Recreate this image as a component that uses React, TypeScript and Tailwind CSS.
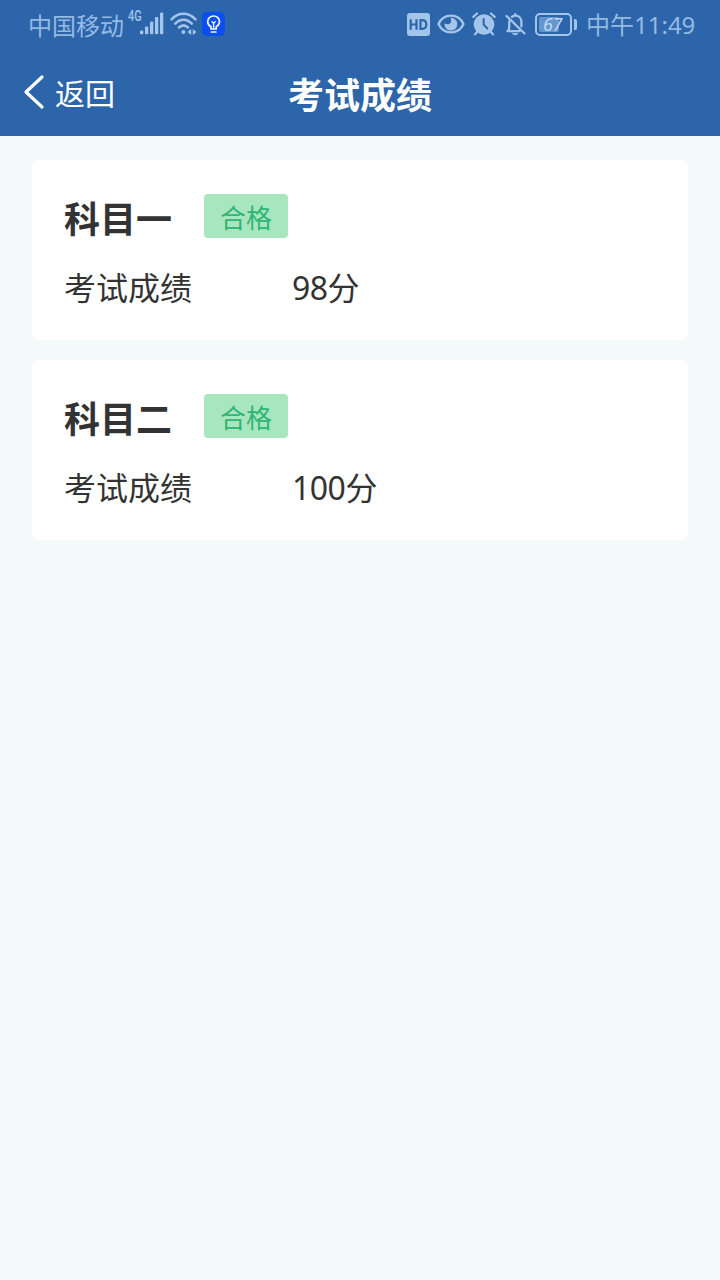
const TINT = '#a3c5ea';

function SignalIcon() {
  return (
    <svg width="24" height="24" viewBox="0 0 24 24" fill={TINT} className="block shrink-0">
      <rect x="0" y="18.5" width="3.300" height="3.8" rx="1" />
      <rect x="5" y="14.5" width="3.300" height="7.8" rx="1" />
      <rect x="10" y="9.5" width="3.300" height="12.8" rx="1" />
      <rect x="15" y="5" width="3.300" height="17.3" rx="1" />
      <rect x="20" y="0.6" width="3.300" height="21.7" rx="1" />
    </svg>
  );
}

function WifiIcon() {
  return (
    <svg width="28" height="24" viewBox="0 0 28 24" fill="none" stroke={TINT} strokeWidth="2.5" strokeLinecap="round" className="block shrink-0">
      <path d="M1.5 7.4C8.5 0 18.500 0 25.500 7.400" />
      <path d="M5.200 11.600C10.200 6.300 16.800 6.300 21.800 11.600" />
      <path d="M9 15.500C12 12.600 15 12.600 18 15.500" />
      <circle cx="13.400" cy="20" r="2" fill={TINT} stroke="none" />
      <path d="M21.200 17V23L17.500 20ZM22.800 17V23L26.500 20Z" fill={TINT} stroke="none" />
    </svg>
  );
}

function BulbIcon() {
  return (
    <svg width="23" height="24" viewBox="0 0 23 24" fill="none" className="block shrink-0">
      <rect width="23" height="24" rx="5" fill="#0b50ee" />
      <g stroke="#f2f6ff" strokeWidth="1.700" strokeLinecap="round" strokeLinejoin="round">
        <path d="M9 17V14.800C7 13.700 5.700 11.900 5.700 9.700A5.900 5.700 0 0 1 17.500 9.700C17.500 11.900 16.200 13.700 14.200 14.800V17ZM9.300 20H13.900" />
        <path d="M11.600 15.500V11.500M10 9.700L11.600 11.300L13.200 9.700" strokeWidth="1.400" />
      </g>
    </svg>
  );
}

function HdIcon() {
  return (
    <svg width="23" height="23" viewBox="0 0 23 23" fill="none" className="block shrink-0">
      <rect width="23" height="23" rx="3" fill={TINT} />
      <path d="M3.700 6.200V16.800M9.500 6.200V16.800M3.700 11.500H9.500M13.500 7.200V15.800H15Q19.300 15.800 19.300 11.500T15 7.200Z" stroke="#2c65a9" strokeWidth="2.200" />
    </svg>
  );
}

function EyeIcon() {
  return (
    <svg width="28" height="20" viewBox="0 0 28 20" fill="none" className="block shrink-0">
      <path d="M1.500 10C4 4.500 8.500 1.600 14 1.600S24 4.500 26.500 10C24 15.500 19.500 18.400 14 18.400S4 15.500 1.500 10Z" stroke={TINT} strokeWidth="2.400" strokeLinejoin="round" />
      <path d="M13.500 3.800A6.400 6.400 0 1 1 7.600 9.200C10 11.300 13.700 10.300 14 7.500C14.100 6 13.900 5 13.500 3.800Z" fill={TINT} />
    </svg>
  );
}

function AlarmIcon() {
  return (
    <svg width="24" height="24" viewBox="0 0 24 24" fill="none" strokeLinecap="round" className="block shrink-0">
      <circle cx="12" cy="12.500" r="10.300" fill={TINT} />
      <path d="M1.300 4.800L5 1.500M22.700 4.800L19 1.500M5.500 19.500L3 22.300M18.500 19.500L21 22.300" stroke={TINT} strokeWidth="2.300" />
      <path d="M11.700 7V12.600L15.300 16.500" stroke="#2c65a9" strokeWidth="2" />
    </svg>
  );
}

function MutedBellIcon() {
  return (
    <svg width="21" height="23" viewBox="0 0 21 23" fill="none" stroke={TINT} strokeWidth="2.300" strokeLinecap="round" strokeLinejoin="round" className="block shrink-0">
      <path d="M1.500 3L19.500 20.500M14.500 18.200H2.500L4.200 15.700V8.500M7 3.800C8 3 9 2.700 10.300 2.700C14 2.700 16.400 5.400 16.400 8.800V13.500M10.300 1.200V2.500" />
      <path d="M7.800 20.700H12.800Q10.300 23.200 7.800 20.700Z" fill={TINT} strokeWidth="1" />
    </svg>
  );
}

function Battery({ level }: { level: number }) {
  return (
    <div className="flex shrink-0 items-center gap-[2px]">
      <div className="flex h-[23px] w-[37px] rounded-[5px] border-2 border-[#a3c5ea] p-[2px]">
        <div className="flex h-full w-[20px] items-center rounded-[2px] bg-[#6696cb]">
          <span className="pl-[4px] font-['Noto_Sans',sans-serif] text-[18px] leading-none tracking-[-0.5px] text-[#bfd9f5] italic">{level}</span>
        </div>
      </div>
      <div className="h-[11px] w-[3px] rounded-r-[2px] bg-[#a3c5ea]" />
    </div>
  );
}

function StatusBar() {
  return (
    <div className="flex h-12 items-center pr-[25px] pl-[28px] text-2xl leading-none whitespace-nowrap text-[#94bae3]">
      <span className="mt-px w-[100px]">中国移动</span>
      <span className="mb-[13px] w-[12px] origin-left scale-x-[0.75] font-['Roboto',sans-serif] text-[14.5px] leading-none font-medium text-[#a3c5ea]">4G</span>
      <SignalIcon />
      <div className="ml-[6px]"><WifiIcon /></div>
      <div className="ml-[4px]"><BulbIcon /></div>
      <div className="ml-auto flex items-center">
        <HdIcon />
        <div className="ml-[7px]"><EyeIcon /></div>
        <div className="ml-[7px]"><AlarmIcon /></div>
        <div className="ml-[9px]"><MutedBellIcon /></div>
        <div className="ml-[9px]"><Battery level={67} /></div>
        <span className="mt-px ml-[9px] w-[109px]">
          中午<span className="font-['Noto_Sans',sans-serif]">11:49</span>
        </span>
      </div>
    </div>
  );
}

function Header() {
  return (
    <header className="grid h-[88px] grid-cols-[1fr_auto_1fr] items-center text-white">
      <button className="flex items-center pl-[23px] text-left">
        <svg width="22" height="36" viewBox="0 0 22 36" fill="none" stroke="currentColor" strokeWidth="3.200" strokeLinecap="round" strokeLinejoin="round" className="block">
          <path d="M19 3L3 18L19 33" />
        </svg>
        <span className="ml-[10px] text-[30px] leading-none">返回</span>
      </button>
      <h1 className="pt-[2px] text-4xl leading-none font-bold">考试成绩</h1>
    </header>
  );
}

interface Result {
  subject: string;
  status: string;
  score: number;
}

const results: Result[] = [
  { subject: '科目一', status: '合格', score: 98 },
  { subject: '科目二', status: '合格', score: 100 },
];

function ResultCard({ subject, status, score }: Result) {
  return (
    <section className="h-[180px] rounded-lg bg-white px-8 pt-[34px] text-[#333333]">
      <div className="flex h-11 items-center">
        <h2 className="w-[140px] pt-[2px] text-4xl leading-none font-bold">{subject}</h2>
        <span className="flex h-11 w-[84px] items-center justify-center rounded bg-[#a8e6bf] pt-[2px] text-[26px] leading-none text-[#2fb574]">{status}</span>
      </div>
      <div className="mt-[32px] flex text-[32px] leading-none">
        <span className="w-[228px]">考试成绩</span>
        <span>
          <span className="font-['Noto_Sans',sans-serif] tracking-[-0.5px]">{score}</span>分
        </span>
      </div>
    </section>
  );
}

export default function App() {
  return (
    <div className="min-h-screen bg-[#f4f9fa] font-['Noto_Sans_CJK_SC',sans-serif]">
      <div className="bg-[#2c65a9]">
        <StatusBar />
        <Header />
      </div>
      <main className="flex flex-col gap-5 px-8 pt-6">
        {results.map((result) => (
          <ResultCard key={result.subject} {...result} />
        ))}
      </main>
    </div>
  );
}
